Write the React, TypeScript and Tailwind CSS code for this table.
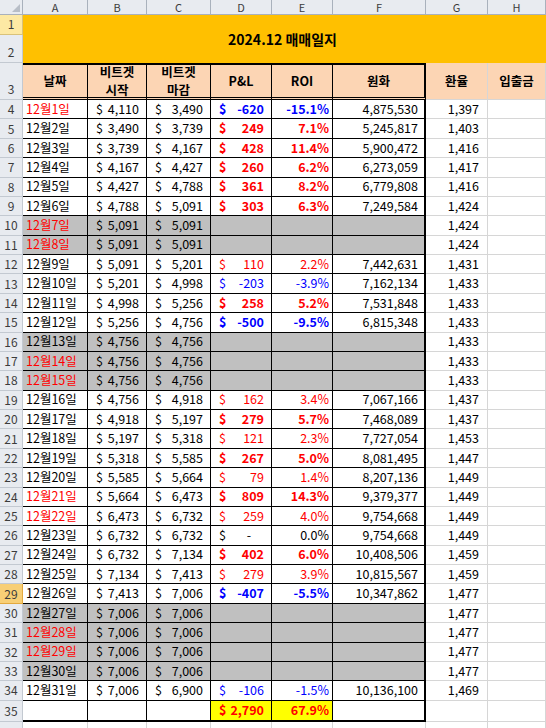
import React from 'react';

type Day = {
  d: number;
  b: string;
  c: string;
  pl?: string;
  roi?: string;
  won?: string;
  rate: string;
};

const days: Day[] = [
  { d: 1, b: '4,110', c: '3,490', pl: '-620', roi: '-15.1%', won: '4,875,530', rate: '1,397' },
  { d: 2, b: '3,490', c: '3,739', pl: '249', roi: '7.1%', won: '5,245,817', rate: '1,403' },
  { d: 3, b: '3,739', c: '4,167', pl: '428', roi: '11.4%', won: '5,900,472', rate: '1,416' },
  { d: 4, b: '4,167', c: '4,427', pl: '260', roi: '6.2%', won: '6,273,059', rate: '1,417' },
  { d: 5, b: '4,427', c: '4,788', pl: '361', roi: '8.2%', won: '6,779,808', rate: '1,416' },
  { d: 6, b: '4,788', c: '5,091', pl: '303', roi: '6.3%', won: '7,249,584', rate: '1,424' },
  { d: 7, b: '5,091', c: '5,091', rate: '1,424' },
  { d: 8, b: '5,091', c: '5,091', rate: '1,424' },
  { d: 9, b: '5,091', c: '5,201', pl: '110', roi: '2.2%', won: '7,442,631', rate: '1,431' },
  { d: 10, b: '5,201', c: '4,998', pl: '-203', roi: '-3.9%', won: '7,162,134', rate: '1,433' },
  { d: 11, b: '4,998', c: '5,256', pl: '258', roi: '5.2%', won: '7,531,848', rate: '1,433' },
  { d: 12, b: '5,256', c: '4,756', pl: '-500', roi: '-9.5%', won: '6,815,348', rate: '1,433' },
  { d: 13, b: '4,756', c: '4,756', rate: '1,433' },
  { d: 14, b: '4,756', c: '4,756', rate: '1,433' },
  { d: 15, b: '4,756', c: '4,756', rate: '1,433' },
  { d: 16, b: '4,756', c: '4,918', pl: '162', roi: '3.4%', won: '7,067,166', rate: '1,437' },
  { d: 17, b: '4,918', c: '5,197', pl: '279', roi: '5.7%', won: '7,468,089', rate: '1,437' },
  { d: 18, b: '5,197', c: '5,318', pl: '121', roi: '2.3%', won: '7,727,054', rate: '1,453' },
  { d: 19, b: '5,318', c: '5,585', pl: '267', roi: '5.0%', won: '8,081,495', rate: '1,447' },
  { d: 20, b: '5,585', c: '5,664', pl: '79', roi: '1.4%', won: '8,207,136', rate: '1,449' },
  { d: 21, b: '5,664', c: '6,473', pl: '809', roi: '14.3%', won: '9,379,377', rate: '1,449' },
  { d: 22, b: '6,473', c: '6,732', pl: '259', roi: '4.0%', won: '9,754,668', rate: '1,449' },
  { d: 23, b: '6,732', c: '6,732', pl: '0', roi: '0.0%', won: '9,754,668', rate: '1,449' },
  { d: 24, b: '6,732', c: '7,134', pl: '402', roi: '6.0%', won: '10,408,506', rate: '1,459' },
  { d: 25, b: '7,134', c: '7,413', pl: '279', roi: '3.9%', won: '10,815,567', rate: '1,459' },
  { d: 26, b: '7,413', c: '7,006', pl: '-407', roi: '-5.5%', won: '10,347,862', rate: '1,477' },
  { d: 27, b: '7,006', c: '7,006', rate: '1,477' },
  { d: 28, b: '7,006', c: '7,006', rate: '1,477' },
  { d: 29, b: '7,006', c: '7,006', rate: '1,477' },
  { d: 30, b: '7,006', c: '7,006', rate: '1,477' },
  { d: 31, b: '7,006', c: '6,900', pl: '-106', roi: '-1.5%', won: '10,136,100', rate: '1,469' },
];

const weekend = [1, 7, 8, 14, 15, 21, 22, 28, 29];
const boldDays = [1, 2, 3, 4, 5, 6, 11, 12, 17, 19, 21, 24, 26];

function RowHead({ n, tall, active }: { n: number; tall?: boolean; active?: boolean }) {
  return (
    <div
      className={`w-[23px] shrink-0 flex justify-center border-r border-b text-[12px] text-[#3c3c3c] ${
        tall ? 'items-end pb-[1px]' : 'items-center'
      } ${active ? 'bg-[#f8cf76] border-[#e3a93e]' : 'bg-[#e8ebf0] border-[#c3c9d1]'}`}
    >
      {n}
    </div>
  );
}

function Money({ v, w }: { v: string; w: string }) {
  return (
    <div className={`${w} shrink-0 flex items-center justify-between border-r border-b border-black pl-[8px] pr-[7px]`}>
      <span>$</span>
      <span>{v}</span>
    </div>
  );
}

function DataRow({ day }: { day: Day }) {
  const n = day.d + 3;
  const gray = !day.pl;
  const bg = gray ? 'bg-[#c0c0c0]' : 'bg-white';
  const neg = day.pl?.startsWith('-');
  const zero = day.pl === '0';
  const tone = zero ? 'text-black' : neg ? 'text-[#0000ff]' : 'text-[#ff0000]';
  const weight = boldDays.includes(day.d) ? 'font-bold' : 'font-normal';

  return (
    <div className="flex h-[19.375px]">
      <RowHead n={n} active={n === 29} />
      <div className={`flex shrink-0 ${bg}`}>
        <div
          className={`w-[65px] shrink-0 flex items-center border-r border-b border-black pl-[3px] ${
            weekend.includes(day.d) ? 'text-[#ff0000]' : 'text-black'
          }`}
        >
          12월{day.d}일
        </div>
        <Money v={day.b} w="w-[59px]" />
        <Money v={day.c} w="w-[64px]" />
        {gray ? (
          <div className="w-[61px] shrink-0 border-r border-b border-black" />
        ) : (
          <div
            className={`w-[61px] shrink-0 flex items-center justify-between border-r border-b border-black pl-[8px] ${
              zero ? 'pr-[20px]' : 'pr-[7px]'
            } ${tone} ${weight}`}
          >
            <span>$</span>
            <span>{zero ? '-' : day.pl}</span>
          </div>
        )}
        <div className={`w-[61px] shrink-0 flex items-center justify-end border-r border-b border-black pr-[3px] ${tone} ${weight}`}>
          {day.roi}
        </div>
        <div className="w-[93px] shrink-0 flex items-center justify-end border-r-2 border-b border-black pr-[6px]">
          {day.won}
        </div>
      </div>
      <div className="w-[62px] shrink-0 flex items-center justify-end border-r border-b border-[#d6d6d6] pr-[8px]">
        {day.rate}
      </div>
      <div className="w-[58px] shrink-0 border-r border-b border-[#d6d6d6]" />
    </div>
  );
}

export default function App() {
  const cols = [
    ['A', 'w-[65px]'],
    ['B', 'w-[59px]'],
    ['C', 'w-[64px]'],
    ['D', 'w-[61px]'],
    ['E', 'w-[61px]'],
    ['F', 'w-[93px]'],
    ['G', 'w-[62px]'],
    ['H', 'w-[58px]'],
  ];
  const head = 'shrink-0 flex items-center justify-center border-t-2 border-r border-b-[3px] border-black [border-bottom-style:double]';

  return (
    <div className="w-[546px] h-[728px] overflow-hidden bg-white text-[12.5px] text-black font-['Noto_Sans_CJK_KR','Liberation_Sans',sans-serif]">
      {/* column letters */}
      <div className="flex h-[15px]">
        <div className="relative w-[23px] shrink-0 bg-[#e8ebf0] border-r border-b border-[#a9b1bc]">
          <svg className="absolute right-[2px] bottom-[2px]" width="8" height="8" viewBox="0 0 8 8">
            <polygon points="8,0 8,8 0,8" fill="#b8bec7" />
          </svg>
        </div>
        {cols.map(([l, w]) => (
          <div
            key={l}
            className={`${w} shrink-0 flex items-center justify-center bg-[#e8ebf0] border-r border-b border-[#a9b1bc] text-[11px] text-[#3c3c3c]`}
          >
            {l}
          </div>
        ))}
      </div>

      {/* title rows 1-2 */}
      <div className="flex h-[48px]">
        <div className="flex flex-col w-[23px] shrink-0">
          <div className="h-[20px] flex items-end justify-center pb-[1px] bg-[#fde9a4] border-r border-b border-[#d9c27a] text-[12px] text-[#3c3c3c]">
            1
          </div>
          <div className="h-[28px] flex items-end justify-center pb-[1px] bg-[#e8ebf0] border-r border-b border-[#c3c9d1] text-[12px] text-[#3c3c3c]">
            2
          </div>
        </div>
        <div className="flex-1 flex items-center justify-center bg-[#ffc000] pr-[4px] text-[14px] font-bold">
          2024.12 매매일지
        </div>
      </div>

      {/* header row 3 */}
      <div className="flex h-[37px]">
        <RowHead n={3} tall />
        <div className="flex shrink-0 bg-[#fcd5b4] font-bold leading-[18px]">
          <div className={`w-[65px] ${head}`}>날짜</div>
          <div className={`w-[59px] flex-col ${head}`}>
            <span>비트겟</span>
            <span>시작</span>
          </div>
          <div className={`w-[64px] flex-col ${head}`}>
            <span>비트겟</span>
            <span>마감</span>
          </div>
          <div className={`w-[61px] ${head}`}>P&amp;L</div>
          <div className={`w-[61px] ${head}`}>ROI</div>
          <div className="w-[93px] shrink-0 flex items-center justify-center border-t-2 border-r-2 border-b-[3px] border-black [border-bottom-style:double]">
            원화
          </div>
        </div>
        <div className="w-[62px] shrink-0 flex items-center justify-center bg-[#fcd5b4] border-r border-b border-[#d6d6d6] font-bold">
          환율
        </div>
        <div className="w-[58px] shrink-0 flex items-center justify-center bg-[#fcd5b4] border-r border-b border-[#d6d6d6] font-bold">
          입출금
        </div>
      </div>

      {/* data rows 4-34 */}
      {days.map((day) => (
        <DataRow key={day.d} day={day} />
      ))}

      {/* total row 35 */}
      <div className="flex h-[21.375px]">
        <RowHead n={35} />
        <div className="flex shrink-0 bg-white">
          <div className="w-[65px] shrink-0 border-r border-b-2 border-black" />
          <div className="w-[59px] shrink-0 border-r border-b-2 border-black" />
          <div className="w-[64px] shrink-0 border-r border-b-2 border-black" />
          <div className="w-[61px] shrink-0 flex items-center justify-between bg-[#ffff00] border-r border-b-2 border-black pl-[8px] pr-[7px] font-bold text-[#ff0000]">
            <span>$</span>
            <span>2,790</span>
          </div>
          <div className="w-[61px] shrink-0 flex items-center justify-end bg-[#ffff00] border-r border-b-2 border-black pr-[3px] font-bold text-[#ff0000]">
            67.9%
          </div>
          <div className="w-[93px] shrink-0 border-r-2 border-b-2 border-black" />
        </div>
        <div className="w-[62px] shrink-0 border-r border-b border-[#d6d6d6]" />
        <div className="w-[58px] shrink-0 border-r border-b border-[#d6d6d6]" />
      </div>

      {/* row 36 */}
      <div className="flex h-[20px]">
        <RowHead n={36} />
        {cols.map(([l, w]) => (
          <div key={l} className={`${w} shrink-0 border-r border-b border-[#d6d6d6]`} />
        ))}
      </div>
    </div>
  );
}
